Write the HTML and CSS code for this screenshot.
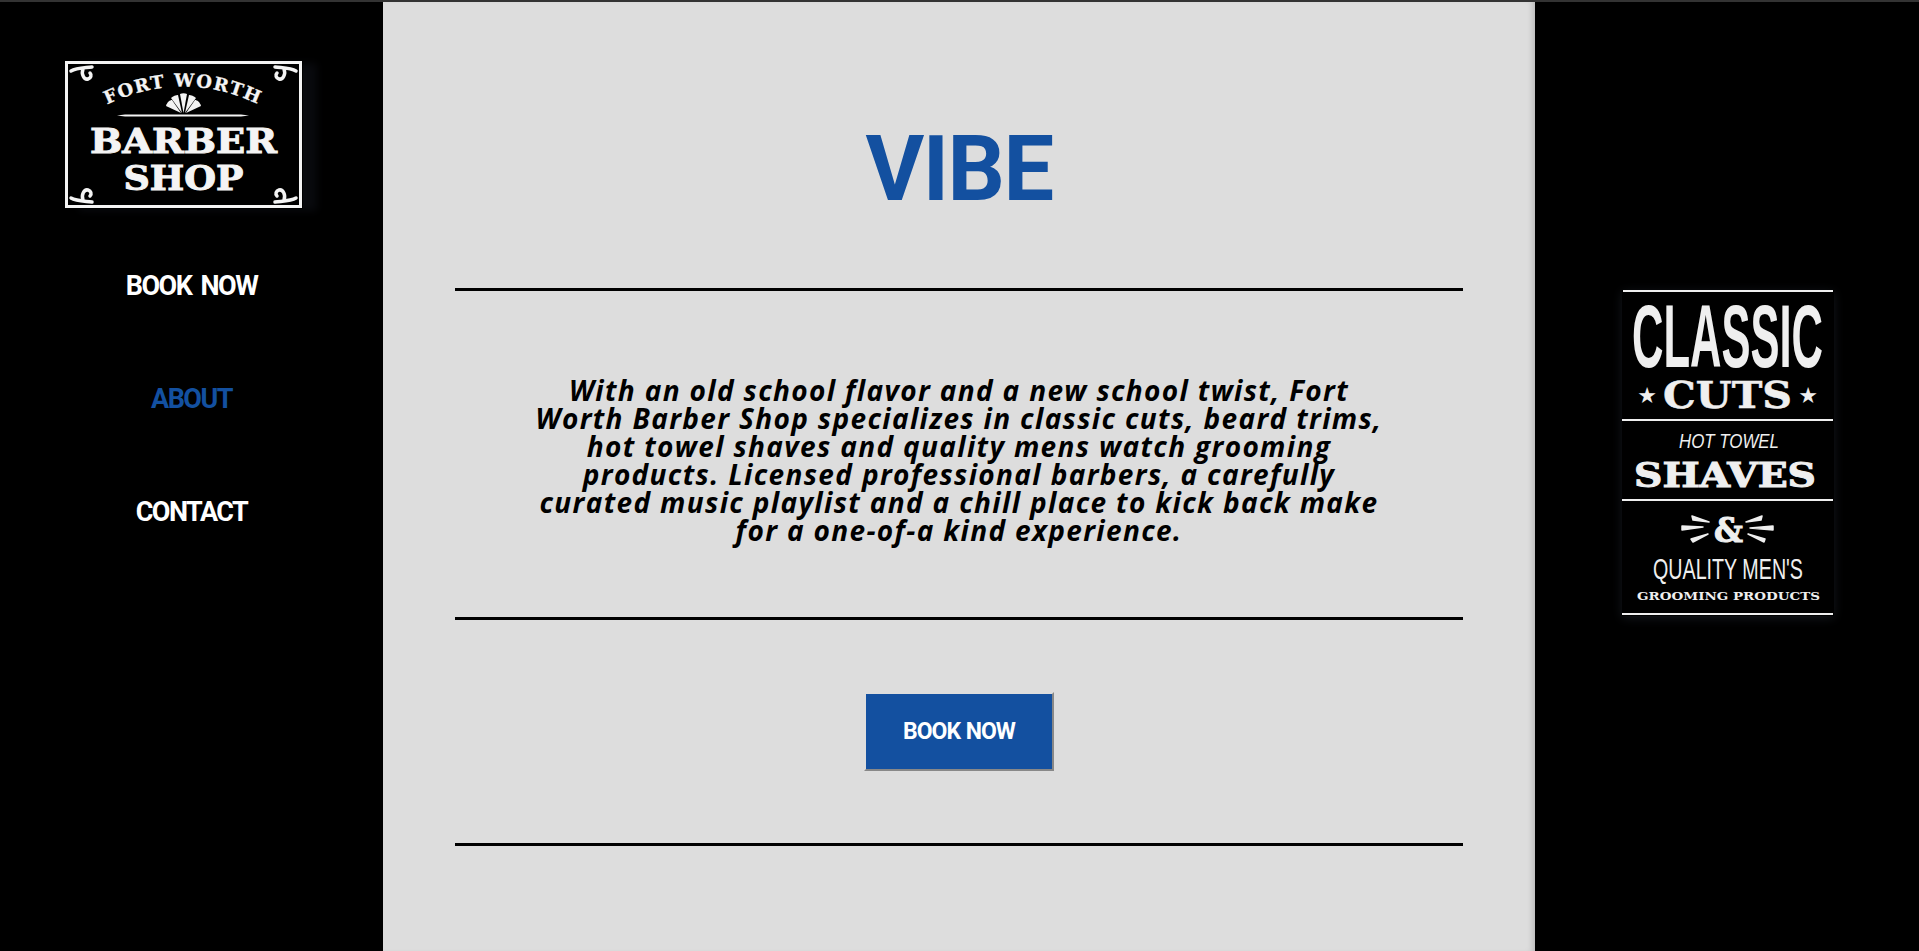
FILE: index.html
```html
<!DOCTYPE html>
<html lang="en">
<head>
<meta charset="utf-8">
<title>Fort Worth Barber Shop</title>
<link rel="stylesheet" href="styles.css">
</head>
<body>
<div class="page">
  <aside class="side">
    <svg class="logo" viewBox="0 0 238 148" width="238" height="148" role="img" aria-label="Fort Worth Barber Shop">
      <rect x="1.500" y="1.500" width="234" height="144" fill="#000" stroke="#f4f4f4" stroke-width="3"/>
      <g fill="none" stroke="#f4f4f4" stroke-width="3.500" stroke-linecap="round">
        <path d="M6 10C11 7 19 7 27 6M18 8C16 13 19 19 23 18C26 17 27 14 25 12"/>
        <path d="M231 10C226 7 218 7 210 6M219 8C221 13 218 19 214 18C211 17 210 14 212 12"/>
        <path d="M6 137C11 140 19 140 27 141M18 139C16 134 19 128 23 129C26 130 27 133 25 135"/>
        <path d="M231 137C226 140 218 140 210 141M219 139C221 134 218 128 214 129C211 130 210 133 212 135"/>
      </g>
      <defs><path id="arc" d="M18 57Q118 -6 218 57"/></defs>
      <text class="logo-arc"><textPath href="#arc" startOffset="50%" text-anchor="middle">FORT WORTH</textPath></text>
      <g fill="#f4f4f4">
        <path d="M116 52L101 45C102 41 105 39 107 39Z"/>
        <path d="M117 52L106 37C108 35 111 34 113 34Z"/>
        <path d="M118.500 52L115 33C117 32 120 32 122 33Z"/>
        <path d="M120 52L124 34C126 34 129 35 131 37Z"/>
        <path d="M121 52L130 39C132 39 135 41 136 45Z"/>
        <path d="M52 54.500L60 53.500H176L184 54.500L176 55.500H60Z"/>
      </g>
      <text class="logo-big" x="118.500" y="92" textLength="187" lengthAdjust="spacingAndGlyphs">BARBER</text>
      <text class="logo-big" x="118.500" y="129" textLength="120" lengthAdjust="spacingAndGlyphs">SHOP</text>
    </svg>
    <nav class="nav">
      <a class="nav-link" href="#">BOOK NOW</a>
      <a class="nav-link nav-current" href="#">ABOUT</a>
      <a class="nav-link" href="#">CONTACT</a>
    </nav>
  </aside>

  <main class="panel">
    <h1 class="title">VIBE</h1>
    <hr class="rule">
    <p class="copy">With an old school flavor and a new school twist, Fort Worth Barber Shop specializes in classic cuts, beard trims, hot towel shaves and quality mens watch grooming products. Licensed professional barbers, a carefully curated music playlist and a chill place to kick back make for a one-of-a kind experience.</p>
    <hr class="rule">
    <div class="cta"><a class="button" href="#">BOOK NOW</a></div>
    <hr class="rule">
  </main>

  <aside class="promo-col">
    <svg class="promo" viewBox="0 0 212 326" width="212" height="326" role="img" aria-label="Classic cuts, hot towel shaves and quality men's grooming products">
      <rect width="212" height="326" fill="#000"/>
      <g fill="#efefef">
        <rect x="1" y="0" width="210" height="2"/>
        <rect x="0" y="129" width="211" height="2"/>
        <rect x="0" y="209" width="211" height="2"/>
        <rect x="0" y="323" width="211" height="2"/>
      </g>
      <text class="p-classic" x="105.500" y="77" textLength="191" lengthAdjust="spacingAndGlyphs">CLASSIC</text>
      <text class="p-cuts" x="105.500" y="118" textLength="129" lengthAdjust="spacingAndGlyphs">CUTS</text>
      <text class="p-star" x="25" y="113">★</text>
      <text class="p-star" x="186" y="113">★</text>
      <text class="p-hot" x="107" y="158" textLength="100" lengthAdjust="spacingAndGlyphs">HOT TOWEL</text>
      <text class="p-shaves" x="103" y="197" textLength="182" lengthAdjust="spacingAndGlyphs">SHAVES</text>
      <text class="p-amp" x="106.500" y="252" textLength="29" lengthAdjust="spacingAndGlyphs">&amp;</text>
      <g fill="#efefef" stroke="#efefef" stroke-width="1.500" stroke-linejoin="round">
        <path d="M70 226L87 232L71 230Z"/><path d="M60 236L81 237L60 240Z"/><path d="M69 249L86 244L71 252Z"/>
        <path d="M140 226L124 232L139 230Z"/><path d="M151 236L128 238L151 240Z"/><path d="M143 249L126 244L142 252Z"/>
      </g>
      <text class="p-quality" x="106" y="289" textLength="150" lengthAdjust="spacingAndGlyphs">QUALITY MEN'S</text>
      <text class="p-groom" x="106.500" y="310" textLength="183" lengthAdjust="spacingAndGlyphs">GROOMING PRODUCTS</text>
    </svg>
  </aside>
</div>
</body>
</html>
```
FILE: styles.css
```css
* { box-sizing: border-box; }
html, body { margin: 0; height: 100%; background: #000; overflow: hidden; }
body { font-family: Roboto, "Liberation Sans", sans-serif; }
.page {
  display: grid;
  grid-template-columns: 383px 1152px 384px;
  height: 951px;
  border-top: 2px solid #333;
}
.side { padding-top: 59px; padding-left: 65px; }
.logo { display: block; box-shadow: 14px 2px 8px rgba(25, 30, 40, .35); }
.logo-arc { font: 700 18px "DejaVu Serif", serif; fill: #f4f4f4; letter-spacing: 1.4px; stroke: #f4f4f4; stroke-width: .3px; }
.logo-big { font: 700 34px "DejaVu Serif", serif; fill: #f4f4f4; text-anchor: middle; stroke: #f4f4f4; stroke-width: 1px; }
.nav { display: flex; flex-direction: column; align-items: center; margin: 62px 0 0 -65px; gap: 83px; }
.nav-link { color: #fff; font-size: 27px; line-height: 30px; font-weight: 700; text-decoration: none; letter-spacing: -1.5px; word-spacing: 4px; }
.nav-current { color: #1350a0; }
.panel {
  background: #ddd;
  padding: 0 72px;
  box-shadow: inset -6px 0 6px -4px rgba(0, 0, 0, .18);
  min-height: 949px;
}
.title {
  margin: 0;
  padding-top: 118px;
  height: 286px;
  text-align: center;
  color: #1350a0;
  font-size: 90px;
  line-height: 100px;
  font-weight: 700;
  letter-spacing: -1.5px;
}
.rule { margin: 0; height: 3px; border: 0; background: #000; }
.copy {
  margin: 0;
  height: 326px;
  padding: 85px 73px 0;
  text-align: center;
  font-family: "Open Sans", "DejaVu Sans", sans-serif;
  font-style: italic;
  font-weight: 700;
  font-size: 28px;
  line-height: 28px;
  letter-spacing: 1.35px;
  color: #000;
}
.cta { height: 223px; display: flex; justify-content: center; align-items: flex-start; padding-top: 72px; }
.button {
  display: flex;
  align-items: center;
  justify-content: center;
  width: 190px;
  height: 79px;
  background: #1350a0;
  color: #fff;
  font-size: 23px;
  font-weight: 700;
  letter-spacing: -1px;
  word-spacing: 1px;
  text-decoration: none;
  border: 2px solid;
  border-color: #ddd #888 #888 #ddd;
}
.promo-col { padding: 288px 0 0 87px; }
.promo { display: block; box-shadow: 0 2px 10px rgba(40, 46, 56, .5); }
.promo text { fill: #efefef; text-anchor: middle; }
.p-classic { font: 700 89px "Liberation Sans", sans-serif; }
.p-cuts { font: 700 38px "DejaVu Serif", serif; stroke: #efefef; stroke-width: .5px; }
.p-star { font: 22px "DejaVu Sans", sans-serif; }
.p-hot { font: italic 400 21px "Liberation Sans", sans-serif; }
.p-shaves { font: 700 33px "DejaVu Serif", serif; stroke: #efefef; stroke-width: 1px; }
.p-amp { font: 700 34px "DejaVu Serif", serif; stroke: #efefef; stroke-width: 1px; }
.p-quality { font: 400 29px "Liberation Sans", sans-serif; }
.p-groom { font: 700 11px "DejaVu Serif", serif; }
```
